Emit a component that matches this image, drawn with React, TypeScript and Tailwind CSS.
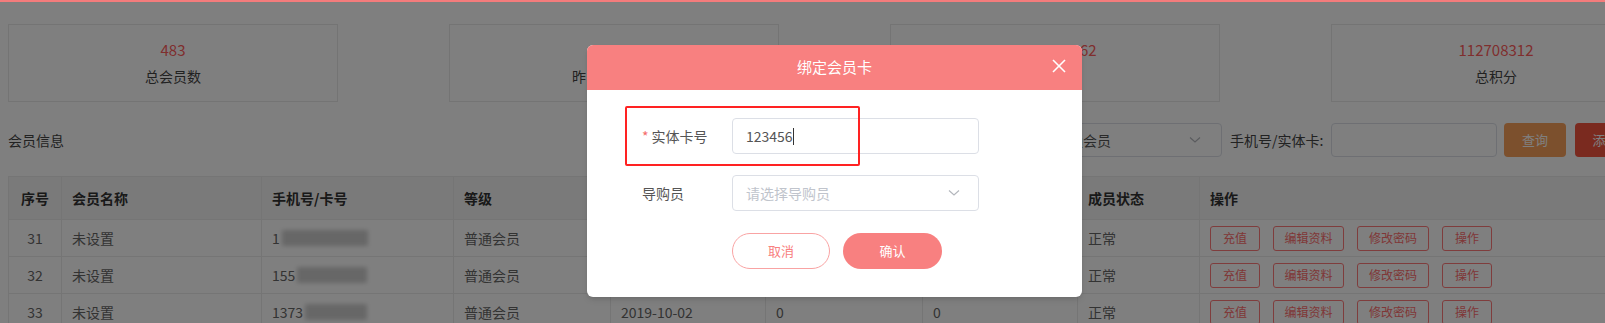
import React from 'react';

const stats = [
  { value: '483', label: '总会员数' },
  { value: '0', label: '昨日新增会员' },
  { value: '1618341562', label: '总余额' },
  { value: '112708312', label: '总积分' },
];

const columns = [
  { label: '序号', w: 'w-[53px]', center: true },
  { label: '会员名称', w: 'w-[200px]' },
  { label: '手机号/卡号', w: 'w-[192px]' },
  { label: '等级', w: 'w-[157px]' },
  { label: '注册时间', w: 'w-[155px]' },
  { label: '余额', w: 'w-[157px]' },
  { label: '积分', w: 'w-[155px]' },
  { label: '成员状态', w: 'w-[122px]' },
  { label: '操作', w: '' },
];

const rows = [
  { no: 31, phoneHead: '1', mask: 'w-[86px]' },
  { no: 32, phoneHead: '155', mask: 'w-[70px]' },
  { no: 33, phoneHead: '1373', mask: 'w-[62px]' },
];

const actions = [
  { label: '充值', w: 'w-[50px]' },
  { label: '编辑资料', w: 'w-[71px]' },
  { label: '修改密码', w: 'w-[72px]' },
  { label: '操作', w: 'w-[50px]' },
];

const Chevron = () => (
  <svg width="12" height="8" viewBox="0 0 12 8" fill="none">
    <polyline points="1,1.5 6,6 11,1.5" stroke="#b4b7bd" strokeWidth="1.2" />
  </svg>
);

export default function App() {
  return (
    <div className="relative w-[1605px] h-[323px] overflow-hidden bg-white font-['Noto_Sans_CJK_SC',sans-serif]">
      {/* page */}
      <div className="w-[1670px] px-2 pt-6">
        {/* stat cards */}
        <div className="flex gap-[111px]">
          {stats.map(s => (
            <div key={s.label} className="w-[330px] h-[78px] border border-[#e8e8e8] flex flex-col items-center justify-center gap-[6px]">
              <p className="text-[15px] leading-[20px] text-[#ff5c5c]">{s.value}</p>
              <p className="text-[14px] leading-[20px] text-[#444]">{s.label}</p>
            </div>
          ))}
        </div>

        {/* filter row */}
        <div className="flex items-center h-[34px] mt-[21px]">
          <span className="text-[14px] text-[#444] leading-[20px]">会员信息</span>
          <div className="ml-auto flex items-center h-full">
            <div className="w-[180px] h-full border border-[#dcdfe6] rounded-[4px] flex items-center justify-between pl-[12px] pr-[20px]">
              <span className="text-[14px] text-[#555]">普通会员</span>
              <Chevron />
            </div>
            <span className="ml-2 text-[14px] text-[#444] w-[101px]">手机号/实体卡:</span>
            <div className="w-[166px] h-full border border-[#dcdfe6] rounded-[4px]" />
            <button className="ml-[7px] w-[62px] h-full rounded-[4px] bg-[#f9a05a] text-white text-[13px]">查询</button>
            <button className="ml-[9px] w-[87px] h-full rounded-[4px] bg-[#f4543e] text-white text-[13px]">添加会员</button>
          </div>
        </div>

        {/* table */}
        <table className="mt-[19px] w-full border-collapse text-[14px]">
          <thead>
            <tr className="h-[43px] bg-[#f5f5f5]">
              {columns.map(c => (
                <th key={c.label} className={`${c.w} border border-[#ebebeb] px-[10px] font-bold text-[#333] ${c.center ? 'text-center' : 'text-left'}`}>
                  {c.label}
                </th>
              ))}
            </tr>
          </thead>
          <tbody>
            {rows.map(r => (
              <tr key={r.no} className="h-[37px] text-[#666]">
                <td className="border border-[#ebebeb] text-center">{r.no}</td>
                <td className="border border-[#ebebeb] px-[10px]">未设置</td>
                <td className="border border-[#ebebeb] px-[10px]">
                  <div className="flex items-center">
                    <span>{r.phoneHead}</span>
                    {/* masked digits */}
                    <span className={`${r.mask} ml-[2px] h-[16px] bg-[#cfcfcf] blur-[2px]`} />
                  </div>
                </td>
                <td className="border border-[#ebebeb] px-[10px]">普通会员</td>
                <td className="border border-[#ebebeb] px-[10px]">2019-10-02</td>
                <td className="border border-[#ebebeb] px-[10px]">0</td>
                <td className="border border-[#ebebeb] px-[10px]">0</td>
                <td className="border border-[#ebebeb] px-[10px]">正常</td>
                <td className="border border-[#ebebeb] px-[10px]">
                  <div className="flex gap-[13px]">
                    {actions.map(a => (
                      <button key={a.label} className={`${a.w} h-[25px] border border-[#ff7b7b] rounded-[3px] text-[12px] text-[#ff6e6e]`}>
                        {a.label}
                      </button>
                    ))}
                  </div>
                </td>
              </tr>
            ))}
          </tbody>
        </table>
      </div>

      {/* mask */}
      <div className="absolute inset-0 bg-black/50" />
      <div className="absolute top-0 left-0 right-0 h-[2px] bg-[#f47c7c]" />

      {/* dialog */}
      <div className="absolute left-[587px] top-[45px] w-[495px] h-[252px] bg-white rounded-[6px] overflow-hidden shadow-md">
        <div className="relative h-[45px] bg-[#f88080] flex items-center justify-center">
          <span className="text-white text-[15px]">绑定会员卡</span>
          <svg className="absolute right-[16px] top-[14px]" width="14" height="14" viewBox="0 0 14 14" fill="none">
            <line x1="1" y1="1" x2="13" y2="13" stroke="white" strokeWidth="1.6" />
            <line x1="13" y1="1" x2="1" y2="13" stroke="white" strokeWidth="1.6" />
          </svg>
        </div>

        <div className="pl-[55px] pt-[28px] flex flex-col gap-[21px]">
          <div className="flex items-center">
            <label className="w-[90px] text-[14px] text-[#555]">
              <span className="text-[#f56c6c] mr-[3px]">*</span>实体卡号
            </label>
            <div className="w-[247px] h-[36px] border border-[#dcdfe6] rounded-[4px] flex items-center px-[13px] text-[14px] text-[#555]">
              123456
              <span className="w-px h-[17px] bg-[#333]" />
            </div>
          </div>

          <div className="flex items-center">
            <label className="w-[90px] text-[14px] text-[#555]">导购员</label>
            <div className="w-[247px] h-[36px] border border-[#dcdfe6] rounded-[4px] flex items-center justify-between pl-[13px] pr-[18px] text-[14px] text-[#c0c4cc]">
              请选择导购员
              <Chevron />
            </div>
          </div>

          <div className="flex ml-[90px] gap-[13px] pt-px">
            <button className="w-[98px] h-[36px] rounded-full border border-[#f9a3a3] text-[#f88080] text-[13px]">取消</button>
            <button className="w-[99px] h-[36px] rounded-full bg-[#f88080] text-white text-[13px]">确认</button>
          </div>
        </div>
      </div>

      {/* annotation */}
      <div className="absolute left-[625px] top-[106px] w-[235px] h-[60px] border-2 border-[#ff2222] rounded-[2px]" />
    </div>
  );
}
